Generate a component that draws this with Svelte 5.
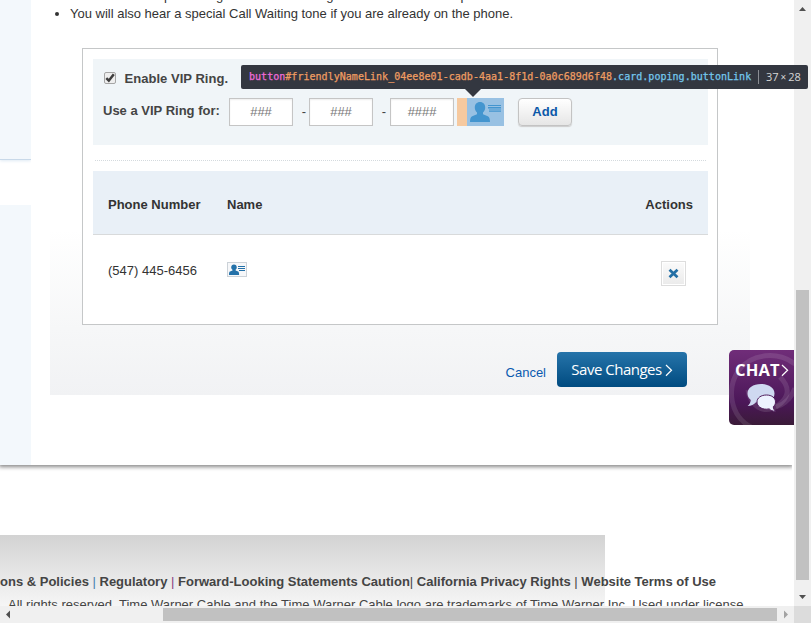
<script>
  const notes = [
    'You will hear a special ring when a VIP calling from the list is on the phone.',
    'You will also hear a special Call Waiting tone if you are already on the phone.'
  ];
  const fields = ['###', '###', '####'];
</script>

{#snippet person()}
  <path d="M13 4c3.200 0 5.200 2.300 5.200 5.500 0 2-.8 3.800-2.200 4.900v1.800l4.800 2c1.600.7 2.200 2.600 2.200 5.800H3c0-3.200.6-5.100 2.200-5.800l4.800-2v-1.800c-1.400-1.100-2.200-2.900-2.200-4.900C7.800 6.300 9.800 4 13 4z" />
  <path d="M21 7h13v1h-13zM21 9h13v1.500H21zM22 11.500h12v1H22zM22 13.200h12v.8H22z" />
{/snippet}

<div class="window">
  <div class="viewport">
    <div class="page">
      <aside><div class="side first"></div><div class="side second"></div></aside>
      <main>
        <ul>{#each notes as note}<li>{note}</li>{/each}</ul>
        <section class="form">
          <div class="card">
            <div class="settings">
              <label class="enable">
                <span class="check"><svg width="12" height="12" viewBox="0 0 12 12"><path d="M2.300 6.200l2.500 2.500 5-6.500" fill="none" stroke="#3d3d3d" stroke-width="2.500" /></svg></span>
                <span>Enable VIP Ring.</span>
              </label>
              <div class="number">
                <span class="caption">Use a VIP Ring for:</span>
                {#each fields as f, i}
                  {#if i}<span class="dash">-</span>{/if}
                  <span class="field">{f}</span>
                {/each}
                <span class="inspect">
                  <svg width="37" height="28" viewBox="0 0 37 28" fill="#4395cf">{@render person()}</svg>
                </span>
                <span class="add">Add</span>
              </div>
            </div>
            <div class="dots"></div>
            <div class="head"><span class="c1">Phone Number</span><span class="c2">Name</span><span>Actions</span></div>
            <div class="row">
              <span class="c1">(547) 445-6456</span>
              <span class="c2"><span class="mini"><svg width="18" height="13" viewBox="0 0 18 13" fill="#2371a9"><path d="M6 1.500c1.700 0 2.800 1.200 2.800 2.800 0 1-.4 1.900-1.200 2.500v.8l2.500.8c.7.300 1 1.300 1 3.600H1c0-2.300.3-3.300 1-3.600l2.500-.8v-.8C3.700 6.200 3.200 5.300 3.200 4.300c0-1.600 1.100-2.800 2.800-2.800z" /><path d="M10 3h7v1h-7zM10 5h7v1h-7zM11 7h6v1h-6z" /></svg></span></span>
              <span class="remove"><svg width="21" height="21" viewBox="0 0 21 21"><path d="M6.500 6.700l8 7.600M14.500 6.700l-8 7.600" stroke="#236fa5" stroke-width="2.700" /></svg></span>
            </div>
          </div>
          <div class="buttons">
            <span class="cancel">Cancel</span>
            <span class="save"><span>Save Changes</span><svg width="8" height="13" viewBox="0 0 8 13"><path d="M1 1l5.500 5.300L1 11.700" fill="none" stroke="#fff" stroke-width="1.200" /></svg></span>
          </div>
        </section>
      </main>
    </div>
    <footer>
      <div class="links">ons &amp; Policies <i class="b">|</i> Regulatory <i class="p">|</i> Forward-Looking Statements Caution<i>|</i> California Privacy Rights <i>|</i> Website Terms of Use</div>
      <div class="legal">All rights reserved. Time Warner Cable and the Time Warner Cable logo are trademarks of Time Warner Inc. Used under license.</div>
    </footer>

    <div class="chat">
      <svg class="swirl" width="65" height="75" viewBox="0 0 65 75" fill="none" stroke="#fff" stroke-opacity=".11">
        <path d="M22 77C1 66-3 38 10 20 23 3 49 1 66 14" stroke-width="5" />
        <path d="M51 27C62 38 60 48 48 56 34 65 21 55 19 40" stroke-width="5" />
        <path d="M66 38C62 49 56 54 47 57" stroke-width="5" />
      </svg>
      <div class="chat-label"><span>CHAT</span><svg width="8" height="13" viewBox="0 0 8 13"><path d="M1 1l5.600 5.300L1 11.800" fill="none" stroke="#fff" stroke-width="1.200" /></svg></div>
      <svg class="bubbles" width="32" height="29" viewBox="0 0 32 29">
        <path d="M15 1c8 0 13.500 4 13.500 9.500S23 20 15 20c-2 0-3.500-.2-5-.7-2 2.200-4.700 3.600-8.400 3.700 2-1.600 3-3.500 3.200-6C2.600 15.200 1.500 13 1.500 10.500 1.500 5 7 1 15 1z" fill="#cfd9f1" />
        <path d="M20.500 12c5.400 0 9 3 9 7 0 2-.9 3.600-2.200 4.800.1 1.700.8 3.200 2.200 4.400-3 0-4.800-.8-6.300-2.300-.8.200-1.700.3-2.700.3-5.400 0-9.500-3-9.500-7.200s4.100-7 9.500-7z" fill="#edf2ff" stroke="#501d5c" stroke-width="1" />
      </svg>
    </div>
  </div>

  <div class="vbar">
    <svg width="17" height="17"><path d="M5 11l3.500-4L12 11z" fill="#505050" /></svg>
    <div class="vthumb"></div>
    <svg width="17" height="17"><path d="M5 6l3.500 4L12 6z" fill="#505050" /></svg>
  </div>
  <div class="hbar">
    <svg width="17" height="17"><path d="M10 4.500L6 8.500l4 4z" fill="#505050" /></svg>
    <div class="hthumb"></div>
    <svg width="17" height="17"><path d="M7 4.500l4 4-4 4z" fill="#a3a3a3" /></svg>
  </div>
  <div class="corner"></div>

  <div class="tooltip">
    <span class="selector"><span class="tag">button</span><span class="id">#friendlyNameLink_04ee8e01-cadb-4aa1-8f1d-0a0c689d6f48</span><span class="cls">.card.poping.buttonLink</span></span>
    <span class="size"><span>37</span><small>×</small><span>28</span></span>
  </div>
</div>

<style>
  :global(body) { margin: 0; overflow: hidden; }
  * { box-sizing: border-box; }
  svg { display: block; flex: none; }
  .window { position: relative; width: 811px; height: 623px; display: grid; grid-template: 606px 17px / 794px 17px; font: 13px/18px "Liberation Sans", Arial, sans-serif; color: #333; background: #fff; overflow: hidden; white-space: nowrap; }
  .viewport { position: relative; overflow: hidden; display: flex; flex-direction: column; min-width: 0; }
  .page { height: 465px; flex: none; display: flex; box-shadow: 0 1px 4px 1px #888; margin-right: 2px; background: #fff; clip-path: inset(0 0 -8px 0); }
  aside { width: 31px; flex: none; display: flex; flex-direction: column; gap: 45px; overflow: hidden; }
  .side { background: #f3f8fc; }
  .first { height: 160px; border-bottom: 1px solid #c8d9e9; box-shadow: 0 1px 3px #dfeaf4; }
  .second { flex: 1; }
  main { padding-left: 19px; width: 719px; flex: none; }
  ul { list-style: none; margin: -13px 0 0; padding: 0 0 0 20px; height: 61px; letter-spacing: -.005px; }
  li { height: 18px; display: flex; align-items: center; }
  li::before { content: ""; width: 4px; height: 4px; border-radius: 2px; background: #333; margin-left: -15px; margin-right: 11px; }
  .form { width: 700px; height: 347px; padding: 0 32px; background: linear-gradient(#fff, #f6f7f8 60%, #f1f2f4) bottom / 100% 165px no-repeat; }
  .card { height: 277px; border: 1px solid #c5c7c8; background: #fff; padding: 10px 9px 0 10px; }
  .settings { height: 86px; background: #f0f5f8; padding: 11px 10px 10px; font-weight: bold; color: #444; }
  .enable { display: flex; align-items: center; height: 18px; gap: 9px; letter-spacing: .03px; padding-left: .5px; }
  .check { width: 12px; height: 12px; border: 1px solid #a5a5a5; border-radius: 2px; background: #eee; display: flex; align-items: center; justify-content: center; position: relative; top: -1px; }
  .number { display: flex; align-items: center; height: 28px; margin-top: 10px; }
  .caption { width: 126px; padding-bottom: 2px; }
  .field { width: 64px; height: 28px; border: 1px solid #c5c5c5; background: #fff; box-shadow: inset 0 1px 2px #eee; font-weight: normal; color: #777; display: flex; align-items: center; justify-content: center; letter-spacing: -.05px; }
  .dash { width: 16px; font-weight: normal; text-align: right; padding-right: 3px; }
  .dash ~ .dash { width: 17px; padding-right: 4px; }
  .inspect { width: 47px; height: 28px; border-left: 10px solid #f6c99f; background: #98c1e3; margin-left: 3px; }
  .add { width: 54px; height: 28px; margin-left: 14px; border: 1px solid #c3c3c3; border-radius: 4px; background: linear-gradient(#fff, #e6e6e6); box-shadow: 0 1px 1px #ccc; color: #0c59a9; display: flex; align-items: center; justify-content: center; }
  .dots { height: 26px; margin: 0 2px; background: repeating-linear-gradient(90deg, #d4dade 0 1px, transparent 1px 2px) 0 15px / 100% 1px no-repeat; }
  .head { height: 64px; background: #e9f0f7; border-bottom: 1px solid #d8dadb; display: flex; align-items: center; padding: 5px 15px 0; font-weight: bold; }
  .c1 { width: 119px; }
  .c2 { flex: 1; }
  .row { height: 72px; display: flex; align-items: center; padding: 0 22px 0 15px; }
  .mini { display: block; width: 20px; height: 15px; border: 1px solid #ccd2d8; background: #f6f7f9; margin-bottom: 3px; }
  .remove { width: 25px; height: 25px; border: 1px solid #ddd; background: linear-gradient(#fafafa, #ebebeb) content-box; padding: 1px; position: relative; top: 2px; }
  .buttons { display: flex; align-items: center; justify-content: flex-end; gap: 11px; padding: 27px 31px 0 0; }
  .cancel { color: #0a5ab0; padding-top: 6px; }
  .save { width: 130px; height: 35px; border-radius: 4px; background: linear-gradient(#2674aa, #004b80); color: #fff; font: 500 15px/20px "Open Sans", sans-serif; letter-spacing: -.5px; display: flex; align-items: center; justify-content: center; gap: 3px; padding-top: 1px; }
  .save span { padding-bottom: 2px; }
  footer { height: 90px; flex: none; margin-top: 70px; padding-top: 38px; background: linear-gradient(#d3d3d3, #fff) left / 605px 100% no-repeat; color: #444; }
  .links { font-weight: bold; }
  .links i { font-style: normal; font-weight: normal; }
  .links .b { color: #447fae; }
  .links .p { color: #863a83; }
  .legal { padding: 5px 0 0 8px; }
  .chat { position: absolute; left: 729px; top: 350px; width: 65px; height: 75px; border-radius: 5px 0 0 5px; overflow: hidden; background: linear-gradient(#702d79, #4b1758 70%, #3a1b38); color: #fff; display: flex; flex-direction: column; }
  .swirl { position: absolute; left: 0; top: 0; }
  .chat-label { position: relative; height: 22px; margin: 9px 0 0 6px; display: flex; align-items: center; gap: 1px; font: bold 16.5px/22px "Open Sans", sans-serif; letter-spacing: .2px; }
  .bubbles { position: relative; margin: 2px 0 0 17px; }
  .vbar { background: #f0f0f0; display: flex; flex-direction: column; }
  .vthumb { width: 13px; height: 290px; margin: 273px 2px auto; background: #c1c1c1; }
  .hbar { background: #f0f0f0; display: flex; justify-content: space-between; }
  .hthumb { width: 614px; height: 13px; margin: 2px 0 0 146px; background: #c1c1c1; }
  .corner { background: #dcdcdc; }
  .tooltip { position: absolute; left: 241px; top: 65px; width: 567px; height: 24px; border-radius: 2px; background: #333740; padding: 0 7px 1px 8px; display: flex; align-items: center; }
  .tooltip::after { content: ""; position: absolute; left: 224px; top: 24px; border: 8px solid transparent; border-top-color: #333740; border-bottom: 0; }
  .selector { font: 10px/14px "DejaVu Sans Mono", monospace; letter-spacing: .03px; width: 509px; -webkit-text-stroke: .25px; }
  .tag { color: #ef6cdb; }
  .id { color: #ef9d62; }
  .cls { color: #73c8ee; }
  .size { border-left: 1px solid #8b8e94; padding-left: 7px; font: 500 11px/14px "Open Sans", sans-serif; color: #d7d7d7; display: flex; gap: 2px; }
  small { font-size: 10px; }
</style>
